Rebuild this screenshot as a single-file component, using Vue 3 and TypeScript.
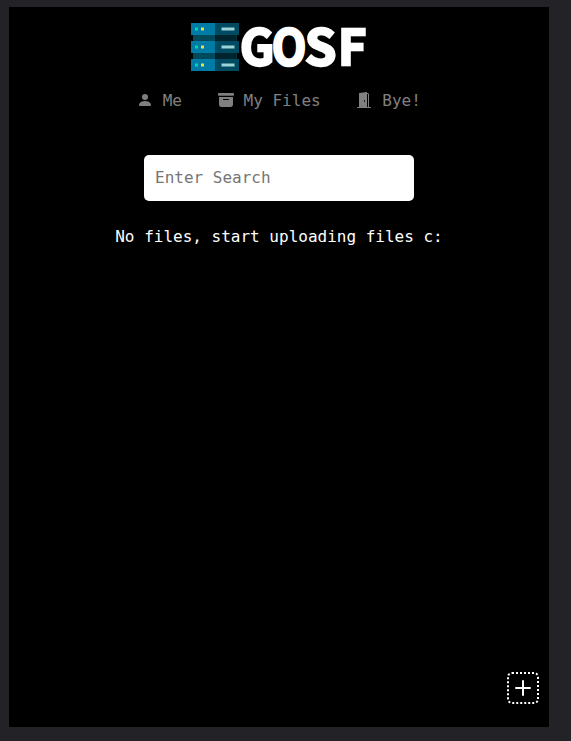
<script setup lang="ts">
import { ref } from 'vue'

interface NavItem {
  label: string
  paths: string[]
}

const query = ref('')

const items: NavItem[] = [
  {
    label: 'Me',
    paths: ['M3 14s-1 0-1-1 1-4 6-4 6 3 6 4-1 1-1 1H3zm5-6a3 3 0 1 0 0-6 3 3 0 0 0 0 6z'],
  },
  {
    label: 'My Files',
    paths: [
      'M12.643 15C13.979 15 15 13.845 15 12.5V5H1v7.5C1 13.845 2.021 15 3.357 15h9.286zM5.5 7h5a.5.5 0 0 1 0 1h-5a.5.5 0 0 1 0-1zM.8 1a.8.8 0 0 0-.8.8V3a.8.8 0 0 0 .8.8h14.4A.8.8 0 0 0 16 3V1.8a.8.8 0 0 0-.8-.8H.8z',
    ],
  },
  {
    label: 'Bye!',
    paths: [
      'M1.5 15a.5.5 0 0 0 0 1h13a.5.5 0 0 0 0-1H13V2.5A1.5 1.5 0 0 0 11.5 1H11V.5a.5.5 0 0 0-.57-.495l-7 1A.5.5 0 0 0 3 1.5V15H1.5zM11 2h.5a.5.5 0 0 1 .5.5V15h-1V2zm-2.5 8c-.276 0-.5-.448-.5-1s.224-1 .5-1 .5.448.5 1-.224 1-.5 1z',
    ],
  },
]

const rackUnits = [0, 18, 36]
</script>

<template>
  <main class="window">
    <header class="logo">
      <svg class="rack" width="48" height="48" viewBox="0 0 48 48" aria-hidden="true">
        <path fill="#004a5c" d="M2 12h22v24H2z" />
        <path fill="#00242e" d="M24 12h21v24H24z" />
        <path fill="#003543" d="M45 12h1v24h-1z" />
        <g v-for="y in rackUnits" :key="y" :transform="`translate(0 ${y})`">
          <path fill="#007ba5" d="M0 0h24v12H0z" />
          <path fill="#004b61" d="M24 0h24v12H24z" />
          <path fill="#00d6a6" d="M4 4.5h3v3H4z" />
          <path fill="#f2dc3a" d="M10 4.5h3v3h-3z" />
          <path fill="#9bd3d8" d="M30.5 4.5h13v3h-13z" />
        </g>
      </svg>
      <svg class="wordmark" width="128" height="48" viewBox="0 0 128 48">
        <text y="42.4"><tspan x="0.9" textLength="34.4" lengthAdjust="spacingAndGlyphs">G</tspan><tspan x="32.8" textLength="34.6" lengthAdjust="spacingAndGlyphs">O</tspan><tspan x="65.7" textLength="31.6" lengthAdjust="spacingAndGlyphs">S</tspan><tspan x="99">F</tspan></text>
      </svg>
    </header>
    <nav class="nav">
      <a v-for="item in items" :key="item.label" class="nav-item">
        <svg width="16" height="16" viewBox="0 0 16 16" fill="currentColor">
          <path v-for="d in item.paths" :key="d" :d="d" />
        </svg>
        <span>{{ item.label }}</span>
      </a>
    </nav>
    <input v-model="query" class="search" type="text" placeholder="Enter Search" />
    <p class="empty">No files, start uploading files c:</p>
    <button class="add" aria-label="Add file">
      <svg width="16" height="16" viewBox="0 0 16 16">
        <path d="M8 1v14M1 8h14" stroke="#fff" stroke-width="2" stroke-linecap="round" />
      </svg>
    </button>
  </main>
</template>

<style>
body {
  background: #232226;
}
</style>

<style scoped>
.window {
  box-sizing: border-box;
  display: flex;
  flex-direction: column;
  align-items: center;
  width: 540px;
  height: 720px;
  margin: 7px 0 14px 9px;
  padding: 16px 10px 23px;
  background: #000;
  color: #fff;
  font: 16px/20px "DejaVu Sans Mono", monospace;
}
.logo {
  display: flex;
  height: 48px;
}
.wordmark {
  overflow: visible;
  fill: #fff;
  stroke: #fff;
  stroke-width: 2.4px;
  font: 700 48.5px "Noto Sans CJK JP", "Noto Sans", sans-serif;
}
.nav {
  display: flex;
  gap: 35.8px;
  margin-top: 20px;
  margin-right: 0.4px;
  color: #808080;
}
.nav-item {
  display: flex;
  gap: 9.9px;
  height: 20px;
}
.nav-item svg {
  margin-top: 1px;
}
.search {
  box-sizing: border-box;
  width: 270px;
  height: 46px;
  margin: 44px 0 0;
  padding: 0 11px 2px;
  border: 0;
  border-radius: 5px;
  outline: 0;
  background: #fff;
  color: #000;
  font: inherit;
}
.search::placeholder {
  color: #757575;
}
.empty {
  margin: 26px 0 0;
}
.add {
  display: grid;
  place-items: center;
  box-sizing: border-box;
  width: 32px;
  height: 32px;
  margin-top: auto;
  align-self: flex-end;
  padding: 0;
  border: 2px dotted #fff;
  border-radius: 5px;
  background: transparent;
}
</style>
